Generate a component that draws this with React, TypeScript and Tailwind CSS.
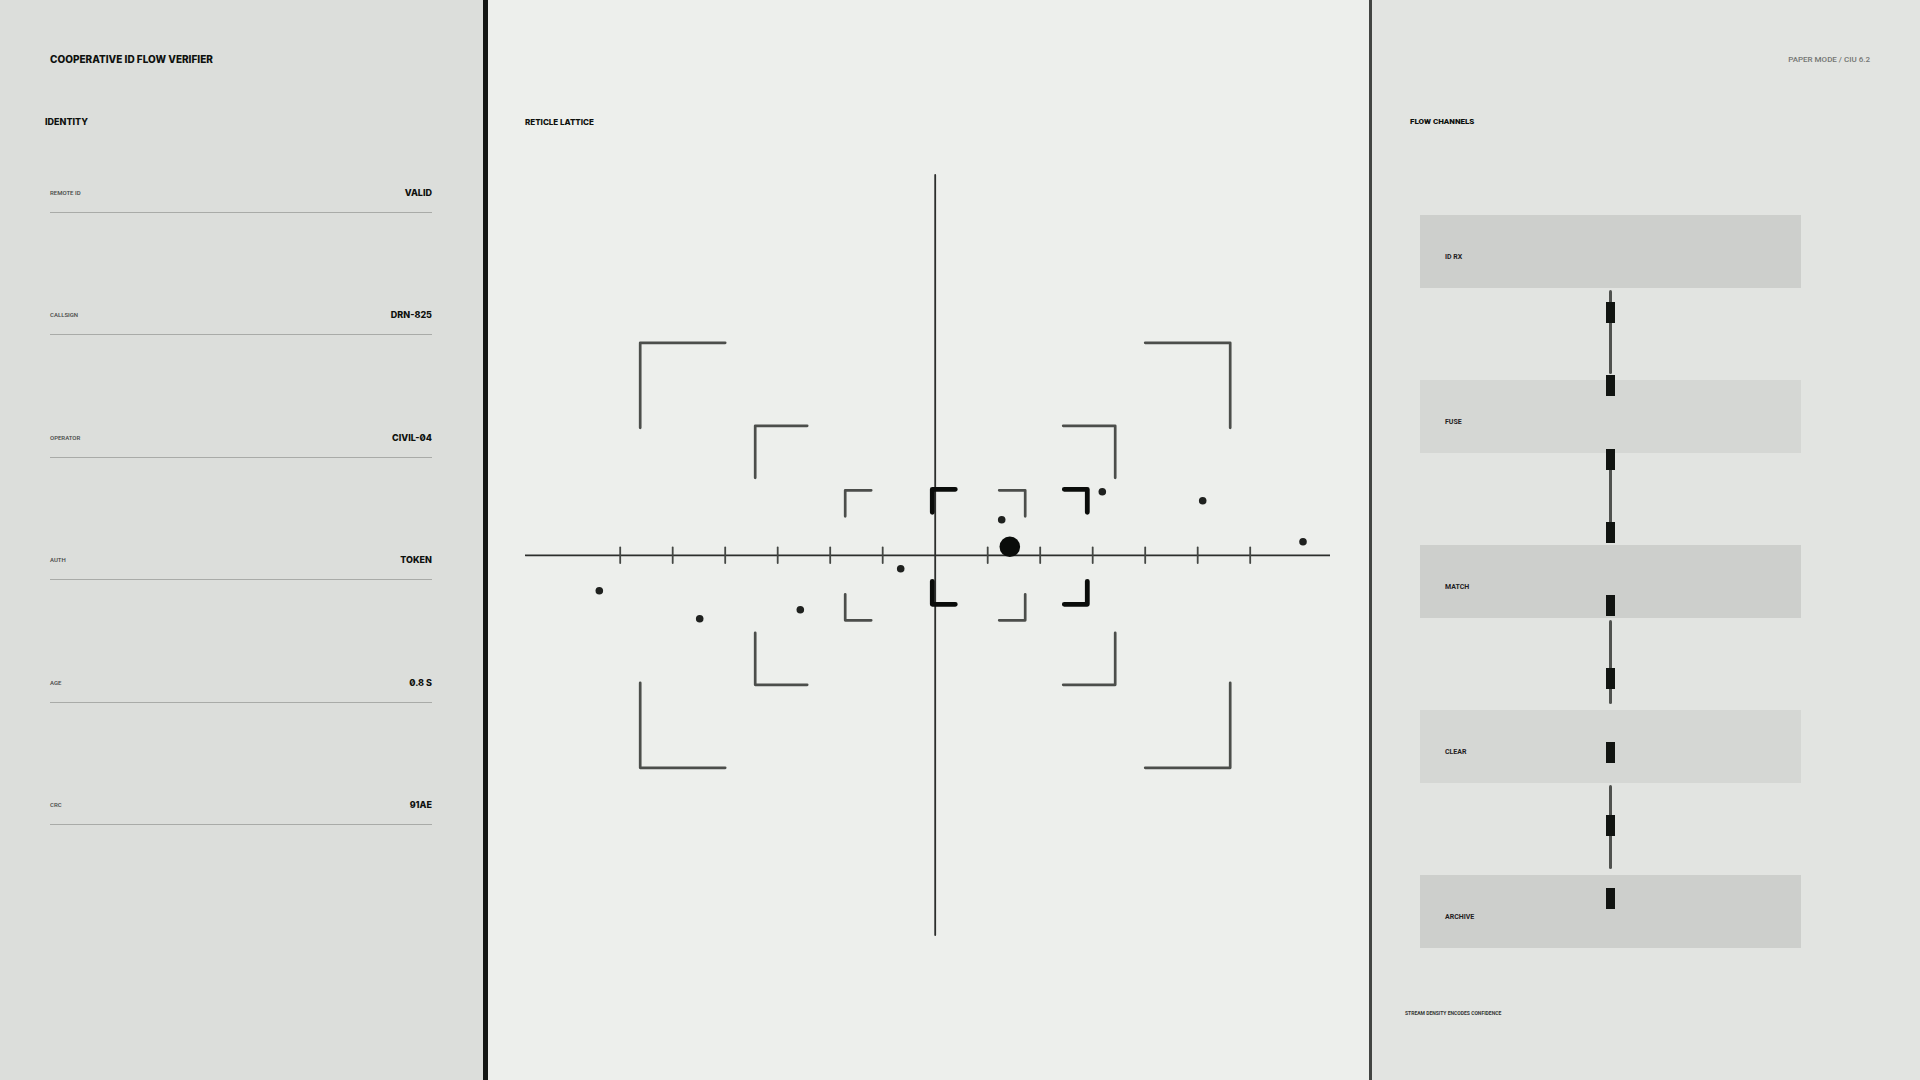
const identity = [
  { label: "REMOTE ID", value: "VALID" },
  { label: "CALLSIGN", value: "DRN-825" },
  { label: "OPERATOR", value: "CIVIL-04" },
  { label: "AUTH", value: "TOKEN" },
  { label: "AGE", value: "0.8 S" },
  { label: "CRC", value: "91AE" },
];

const channels = ["ID RX", "FUSE", "MATCH", "CLEAR", "ARCHIVE"];

const packetCount = 9;

type Frame = { cx: number; cy: number; w: number; h: number; arm: number };

const frames: Frame[] = [
  { cx: 935.2, cy: 555.3, w: 295, h: 212.5, arm: 85 },
  { cx: 935.2, cy: 555.3, w: 180, h: 129.5, arm: 52 },
  { cx: 935.2, cy: 555.3, w: 90, h: 65, arm: 26 },
];

const target: Frame = { cx: 1009.8, cy: 546.8, w: 77.5, h: 57.5, arm: 23 };

const track = [
  [599.3, 590.7],
  [699.7, 618.7],
  [800.3, 609.7],
  [900.7, 568.7],
  [1001.7, 519.7],
  [1102.3, 491.7],
  [1202.7, 500.7],
  [1303, 541.7],
];

const ticks = [-6, -5, -4, -3, -2, -1, 1, 2, 3, 4, 5, 6];

function framePath({ cx, cy, w, h, arm }: Frame) {
  const l = cx - w;
  const r = cx + w;
  const t = cy - h;
  const b = cy + h;
  return [
    `M${l} ${t + arm}V${t}H${l + arm}`,
    `M${r - arm} ${t}H${r}V${t + arm}`,
    `M${r} ${b - arm}V${b}H${r - arm}`,
    `M${l + arm} ${b}H${l}V${b - arm}`,
  ].join("");
}

function Reticle() {
  return (
    <svg viewBox="525 174 805 762" className="block w-full" role="img" aria-label="Reticle lattice" fill="none">
      <g stroke="#2c2e2c" strokeWidth="1.8" strokeLinecap="round">
        <path d="M525.5 555.3H1330M935.2 175V935" />
      </g>
      <g stroke="#444744" strokeWidth="1.8" strokeLinecap="round">
        {ticks.map((n) => (
          <path key={n} d={`M${935.2 + n * 52.5} 547.5V563`} />
        ))}
      </g>
      <g stroke="#4c4e4b" strokeWidth="2.7" strokeLinecap="round" strokeLinejoin="round">
        {frames.map((f) => (
          <path key={f.w} d={framePath(f)} />
        ))}
      </g>
      {track.map(([x, y]) => (
        <circle key={x} cx={x} cy={y} r="3.8" fill="#1f211f" />
      ))}
      <path d={framePath(target)} stroke="#0a0c0a" strokeWidth="4.8" strokeLinecap="round" strokeLinejoin="round" />
      <circle cx="1009.8" cy="546.8" r="10.3" fill="#0a0c0a" />
    </svg>
  );
}

function IdentityPanel() {
  return (
    <section className="flex flex-col border-r-5 border-[#141714] bg-[#dcdedb] pt-[51px] pr-[51px] pb-[255px] pl-[50px]">
      <h1 className="text-[10px] leading-4 font-extrabold">COOPERATIVE ID FLOW VERIFIER</h1>
      <h2 className="mt-[47px] -ml-[5px] text-[9px] leading-4 font-extrabold">IDENTITY</h2>
      <dl className="mt-[53px] flex flex-1 flex-col justify-between">
        {identity.map(({ label, value }) => (
          <div key={label} className="flex h-[30px] items-start justify-between border-b border-[#a9aba8] pt-[2px]">
            <dt className="font-['Roboto'] text-[6px] leading-4 font-medium text-[#454745]">{label}</dt>
            <dd className="text-[9px] leading-4 font-extrabold slashed-zero">{value}</dd>
          </div>
        ))}
      </dl>
    </section>
  );
}

function ReticlePanel() {
  return (
    <section className="bg-[#edefec] pt-[114px] pr-[39px] pl-[37px]">
      <h2 className="text-[8px] leading-4 font-extrabold">RETICLE LATTICE</h2>
      <div className="mt-11">
        <Reticle />
      </div>
    </section>
  );
}

function FlowPanel() {
  return (
    <section className="flex flex-col border-l-3 border-[#424442] bg-[#e2e4e1] pt-[52px] pb-[59px]">
      <p className="pr-[50px] text-right font-['Roboto'] text-[8px] leading-4 font-medium text-[#747673]">
        PAPER MODE / CIU 6.2
      </p>
      <h2 className="mt-[46px] pl-[38px] font-['Roboto'] text-[8px] leading-4 font-black">FLOW CHANNELS</h2>
      <div className="relative mt-[85px] mr-[119px] ml-12">
        <ol className="flex flex-col">
          {channels.map((name, i) => (
            <li key={name} className="group">
              <div
                className={
                  i % 2 === 0
                    ? "flex h-[73px] items-center bg-[#cdcfcc] pt-[10px] pl-[25px]"
                    : "flex h-[73px] items-center bg-[#d5d7d4] pt-[10px] pl-[25px]"
                }
              >
                <span className="font-['Roboto'] text-[7px] leading-4 font-bold text-[#1f211f]">{name}</span>
              </div>
              <div className="flex h-[92px] justify-center pt-[2px] pb-[6px] group-last:hidden">
                <span className="w-[3px] rounded-full bg-[#50524f]" />
              </div>
            </li>
          ))}
        </ol>
        <div className="absolute inset-x-0 top-[87px] bottom-[39px] flex flex-col items-center justify-between">
          {Array.from({ length: packetCount }, (_, i) => (
            <span key={i} className="h-[21px] w-[9px] bg-[#111411]" />
          ))}
        </div>
      </div>
      <p className="mt-auto pl-[33px] font-['Roboto'] text-[5px] leading-4 font-bold text-[#353735]">
        STREAM DENSITY ENCODES CONFIDENCE
      </p>
    </section>
  );
}

export default function App() {
  return (
    <main className="grid min-h-screen grid-cols-[488fr_881fr_551fr] bg-[#edefec] font-['Inter',sans-serif] text-[#0e110e]">
      <IdentityPanel />
      <ReticlePanel />
      <FlowPanel />
    </main>
  );
}
